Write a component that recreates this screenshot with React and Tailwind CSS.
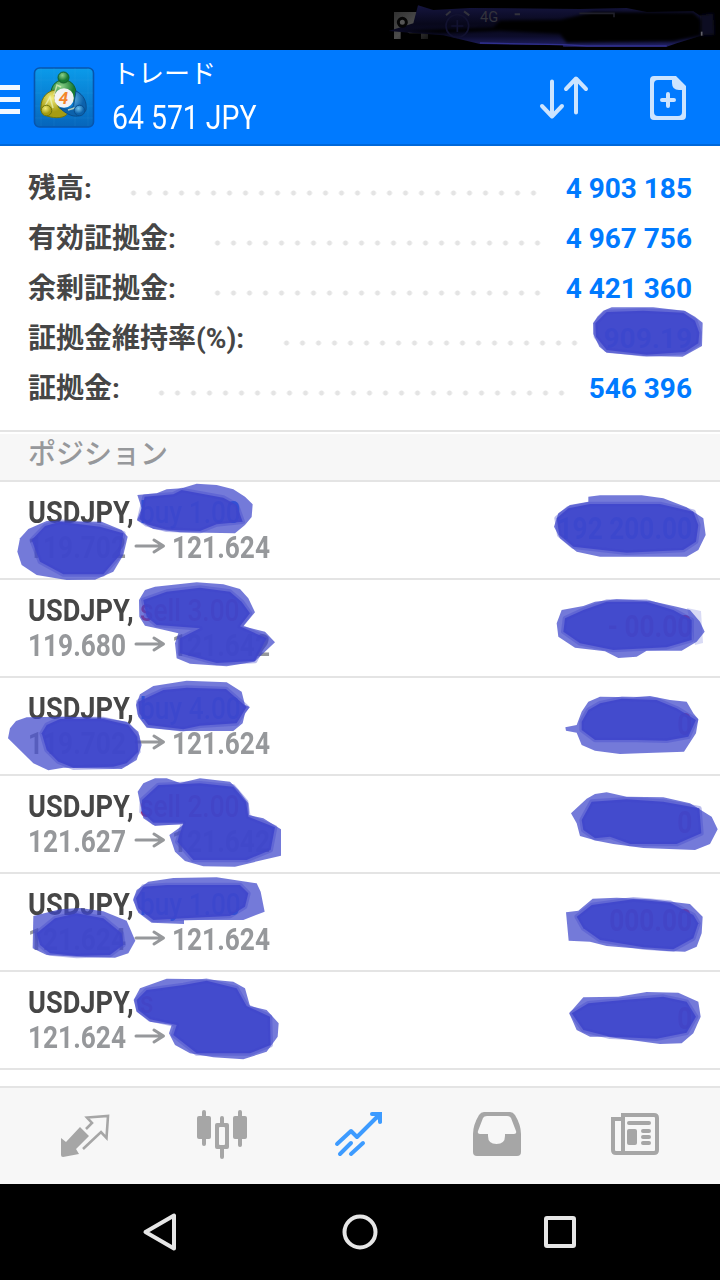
const JP = "font-[Roboto,'Noto_Sans_CJK_JP',sans-serif]";

const stats = [
  { label: "残高:", value: "4 903 185", pad: "w-[97px]", dots: "w-[416px]" },
  { label: "有効証拠金:", value: "4 967 756", pad: "w-[181px]", dots: "w-[336px]" },
  { label: "余剰証拠金:", value: "4 421 360", pad: "w-[181px]", dots: "w-[336px]" },
  { label: "証拠金維持率(%):", value: "909.19", pad: "w-[250px]", dots: "w-[304px]" },
  { label: "証拠金:", value: "546 396", pad: "w-[125px]", dots: "w-[416px]" },
];

const positions = [
  { side: "buy 1.00", open: "119.702", now: "121.624", profit: "192 200.00" },
  { side: "sell 3.00", open: "119.680", now: "121.642", profit: "- 00.00" },
  { side: "buy 4.00", open: "119.702", now: "121.624", profit: "0" },
  { side: "sell 2.00", open: "121.627", now: "121.642", profit: "0" },
  { side: "buy 1.00", open: "121.624", now: "121.624", profit: "000.00" },
  { side: "s", open: "121.624", now: "", profit: "0" },
];

function StatusBar() {
  return (
    <div className="h-[50px] shrink-0 bg-black">
      <svg className="ml-[380px] block" width="340" height="50" viewBox="0 0 1020 150">
        <defs>
          <linearGradient id="ink" x1="0" x2="0" y1="0" y2="1">
            <stop offset="0" stopColor="#15153f" />
            <stop offset=".45" stopColor="#08081b" />
            <stop offset=".75" stopColor="#0c0c2a" />
            <stop offset="1" stopColor="#222268" />
          </linearGradient>
          <linearGradient id="chip" x1="0" x2="1" y1="0" y2="1">
            <stop offset="0" stopColor="#303030" />
            <stop offset=".5" stopColor="#4c4c4c" />
            <stop offset="1" stopColor="#161616" />
          </linearGradient>
          <filter id="soft" x="-5%" y="-20%" width="110%" height="140%"><feGaussianBlur stdDeviation="4" /></filter>
        </defs>
        <path d="M42 36H144V117H123V100H88L62 84V117H42Z" fill="url(#chip)" />
        <path d="M26 93L100 70L114 16L160 30L270 24L600 27L740 24L800 36L940 34L965 50L960 108L890 130L860 140H550L548 136L300 132L190 106L90 98Z" fill="url(#ink)" />
        <path d="M960 46L1000 40L1003 104L960 108Z" fill="#0b0b22" filter="url(#soft)" />
        <path d="M360 62L540 60L640 36L940 38L962 60V106L880 124L560 128L540 102L360 92L180 100L60 92L340 82Z" fill="#010104" filter="url(#soft)" />
        <circle cx="67" cy="67" r="12" fill="#555" stroke="#050505" strokeWidth="9" />
        <path d="M300 129L548 134L620 138H860" stroke="#30308f" strokeWidth="4" fill="none" />
        <circle cx="232" cy="78" r="34" stroke="#121230" strokeWidth="5" fill="none" />
        <path d="M232 60V96M214 78H250" stroke="#121230" strokeWidth="5" />
        <path d="M198 46L212 34M252 34L268 46M404 43H420" stroke="#32323c" strokeWidth="6" />
        <text x="300" y="66" fontSize="44" fill="#33333c" fontFamily="Roboto">4G</text>
        <path d="M598 40H702V52" stroke="#20202a" strokeWidth="5" fill="none" />
        <path d="M965 95V107" stroke="#62626c" strokeWidth="5" />
      </svg>
    </div>
  );
}

function Logo() {
  return (
    <svg className="ml-[11px] block shrink-0" width="66" height="66" viewBox="0 0 66 66">
      <defs>
        <linearGradient id="tile" x1="0" x2="0" y1="0" y2="1">
          <stop offset="0" stopColor="#0b9bea" />
          <stop offset="1" stopColor="#0665bb" />
        </linearGradient>
        <radialGradient id="gr" cx=".4" cy=".3"><stop offset="0" stopColor="#8ed28a" /><stop offset="1" stopColor="#187a32" /></radialGradient>
        <radialGradient id="ye" cx=".4" cy=".3"><stop offset="0" stopColor="#f3ed7c" /><stop offset="1" stopColor="#a59c12" /></radialGradient>
        <radialGradient id="bl" cx=".4" cy=".3"><stop offset="0" stopColor="#6fc3f0" /><stop offset="1" stopColor="#0c62ac" /></radialGradient>
      </defs>
      <rect x="3.500" y="4" width="59" height="59" rx="5" fill="url(#tile)" stroke="#0755ad" strokeWidth="1.6" />
      <path d="M10 4V62M23 4V62M44 4V62M57 4V62M4 16H62M4 29H62M4 42H62M4 54H62" stroke="#41b5f3" strokeOpacity=".15" strokeWidth=".8" />
      <g transform="translate(0 1)">
        <path d="M20 36C18 22 24 15 32.500 15S47 22 45 36L40 36L36 26H29L23 34Z" fill="url(#gr)" stroke="#11602b" />
        <path d="M24 25C13 27 9 36 10 46L16 51C25 54 34 53 37 48L28 43L24 35Z" fill="url(#ye)" stroke="#6f750d" />
        <path d="M45 26C53 30 56 37 55 45C51 53 40 54 29 43C36 45 43 45 43 38Z" fill="url(#bl)" stroke="#094e8e" />
        <path d="M23 30L26 20L30 22M14 41L19 32L22 43M37 45L47 42" stroke="#e9f4c0" strokeOpacity=".7" strokeWidth="1.5" fill="none" />
        <circle cx="32.500" cy="12.500" r="5.500" fill="url(#gr)" stroke="#11602b" />
        <circle cx="15.500" cy="45.500" r="5.300" fill="url(#ye)" stroke="#6f750d" />
        <circle cx="48.500" cy="45.500" r="5.300" fill="url(#bl)" stroke="#094e8e" />
        <circle cx="33" cy="33" r="9.800" fill="#f3f3f5" />
        <text x="32.500" y="39" textAnchor="middle" fontSize="17" fontWeight="700" fontStyle="italic" fill="#f3852b" fontFamily="Roboto">4</text>
      </g>
    </svg>
  );
}

function Header() {
  return (
    <header className="flex h-24 shrink-0 items-center border-b-2 border-[#0068da] bg-[#007aff] text-white">
      <div className="flex h-full w-5 shrink-0 flex-col justify-center gap-[7px] pt-1">
        <i className="h-[5px] bg-white/95" />
        <i className="h-[5px] bg-white/95" />
        <i className="h-[5px] bg-white/95" />
      </div>
      <Logo />
      <div className="ml-[15px] w-[410px] shrink-0">
        <div className={`${JP} h-10 text-[26px] leading-[42px]`}>トレード</div>
        <div className="h-[48px] w-max origin-left scale-x-[0.835] font-[Roboto,sans-serif] text-[34px] leading-[49px] whitespace-nowrap">64 571 JPY</div>
      </div>
      <svg className="ml-[15px] block shrink-0" width="54" height="48" viewBox="0 0 54 48" fill="none" stroke="#cce4ff" strokeWidth="4" strokeLinecap="round" strokeLinejoin="round">
        <path d="M15 8.500V43M5 33L15 43.500L25 33M39 39.500V6M29 16L39 5.500L49 16" />
      </svg>
      <svg className="ml-[55px] block shrink-0" width="42" height="48" viewBox="0 0 42 48">
        <path fill="#cce4ff" fillRule="evenodd" d="M7 3H30L40 13V43Q40 47 36 47H8Q4 47 4 43V7Q4 3 8 3ZM12 7Q8 7 8 11V39Q8 43 12 43H32Q36 43 36 39V17H33Q26 17 26 10V7Z" />
        <path d="M22 21V33M16 27H28" stroke="#cce4ff" strokeWidth="4" strokeLinecap="round" />
      </svg>
    </header>
  );
}

function Stats() {
  return (
    <section className={`${JP} shrink-0 border-b-2 border-[#e4e4e4] px-7 py-[17px] text-[28px] font-bold`}>
      {stats.map((s) => (
        <div key={s.label} className="flex h-[50px] items-center leading-[50px] whitespace-nowrap">
          <span className={`${s.pad} shrink-0 pt-[2px] text-[#464646]`}>{s.label}</span>
          <span className={`${s.dots} mt-[10px] h-[6px] shrink-0 bg-[radial-gradient(circle,#e4e4e4_2.2px,transparent_2.9px)] bg-[length:16px_6px] bg-[position:0.5px_0]`} />
          <span className="ml-auto pt-[2px] text-[#007aff]">{s.value}</span>
        </div>
      ))}
    </section>
  );
}

function Position({ p }) {
  const tone = p.side.startsWith("b") ? "text-[#007aff]" : "text-[#e0203a]";
  const gain = p.profit.startsWith("1") ? "text-[#007aff]" : "text-[#e0203a]";
  return (
    <li className="flex h-[98px] items-start justify-between border-b-2 border-[#e4e4e4] px-7 pt-[13px] text-[32px] leading-[34px] font-bold whitespace-nowrap">
      <div>
        <div className="flex text-[#464646]">
          <span className="w-[112px]"><span className="inline-block origin-left scale-x-[0.85]">USDJPY,</span></span>
          <span className={`inline-block origin-left scale-x-[0.82] font-medium ${tone}`}>{p.side}</span>
        </div>
        <div className="mt-px flex items-center text-[#96989b]">
          <span className="w-[106px]"><span className="inline-block origin-left scale-x-[0.82]">{p.open}</span></span>
          <svg className="mb-[2px] block" width="32" height="18" viewBox="0 0 32 18" fill="none" stroke="#96989b" strokeWidth="3" strokeLinecap="round" strokeLinejoin="round">
            <path d="M2 9H29M20 3L29.500 9L20 15" />
          </svg>
          <span className="ml-[6px] inline-block origin-left scale-x-[0.82]">{p.now}</span>
        </div>
      </div>
      <span className={`mt-4 inline-block origin-right scale-x-[0.82] ${gain}`}>{p.profit}</span>
    </li>
  );
}

const blots = [
  { at: "translate(360 150) scale(.33333)", outer: "M700 520L712 500L730 482L755 472L880 472L975 483L1005 500L1028 518L1026 588L968 620L850 618L740 608L718 590L700 552Z", core: "M706 520L740 486L850 482L970 488L1005 512L1018 548L1015 580L975 606L860 614L740 600L708 560Z" },
  { at: "translate(0 425) scale(.33333)", outer: "M412 210L470 205L500 193L545 190L590 176L650 180L700 193L735 215L758 238L755 276L735 300L705 325L540 322L460 312L411 286L425 250Z", core: "M434 215L520 208L545 195L670 218L710 240L728 290L650 298L600 318L500 314L440 298L418 282Z" },
  { at: "translate(0 425) scale(.33333)", outer: "M52 380L60 340L85 312L140 288L305 290L365 315L383 335L370 390L340 440L285 464L200 465L110 450L65 420Z", core: "M95 345L135 303L180 290L300 305L370 325L360 390L310 448L190 448L120 410Z" },
  { at: "translate(0 425) scale(.33333)", outer: "M417 525L435 495L465 485L590 472L670 478L720 492L745 520L765 562L730 604L795 620L825 652L763 710L680 724L570 716L530 700L525 655L535 625L480 612L435 602L418 575Z", core: "M430 525L500 500L600 488L690 500L725 530L750 565L720 604L800 640L765 708L650 714L540 685L540 640L600 610L470 600L440 575Z" },
  { at: "translate(0 675) scale(.33333)", outer: "M408 90L420 58L460 33L560 17L680 22L725 50L735 90L750 96L735 115L728 145L700 168L540 168L440 158L415 125Z", core: "M415 80L490 45L560 38L678 42L740 96L710 145L600 152L550 163L445 150L418 115Z" },
  { at: "translate(0 675) scale(.33333)", outer: "M24 190L30 160L48 138L80 127L190 125L310 128L380 140L415 170L425 210L410 255L365 282L190 278L145 286L100 265L65 230Z", core: "M125 175L140 150L180 132L310 132L385 150L412 185L415 230L380 265L340 275L220 278L175 260L140 225Z" },
  { at: "translate(0 675) scale(.33333)", outer: "M413 350L430 325L465 310L500 310L540 324L600 310L690 320L715 345L745 385L747 420L790 430L843 463V542L705 575L610 574L555 558L525 530L508 480L555 446L465 453L430 430Z", core: "M426 375L475 330L600 325L700 335L738 380L745 425L825 457L812 525L740 555L580 555L532 500L550 443L460 443L425 410Z" },
  { at: "translate(0 870) scale(.33333)", outer: "M399 90L410 60L445 35L520 24L650 22L770 40L782 65L794 125L730 150L552 150V162L455 158L415 128Z", core: "M408 85L430 50L500 45L720 45L745 70L735 110L690 138L552 145L460 150L415 115Z" },
  { at: "translate(0 870) scale(.33333)", outer: "M100 138L180 118L240 114L310 124L380 152L406 212L385 250L345 263L230 260L140 255L98 235Z", core: "M110 190L165 145L230 130L310 145L365 190L370 225L330 255L230 258L150 250L120 225Z" },
  { at: "translate(0 870) scale(.33333)", outer: "M401 390L420 355L500 326L620 328L700 335L735 355L750 408L800 420L836 460L833 500L800 545L730 568L640 562L570 550L525 525L507 490L515 465L450 455L410 425Z", core: "M410 390L440 360L550 345L620 332L710 355L740 408L810 440L812 525L750 550L590 550L520 495L530 465L450 448L415 420Z" },
  { at: "translate(540 480) scale(.33333)", outer: "M42 140L55 100L90 75L145 65V50L180 46H305L370 55L440 82L490 115L497 165L475 210L440 230H180L110 215L60 175Z", core: "M50 115L85 85L150 72L360 72L460 95L475 135L468 185L430 210L260 218L100 200L58 165Z" },
  { at: "translate(540 480) scale(.33333)", outer: "M50 430L65 390L130 378L165 365L230 358L330 362L410 380L450 390L480 425L494 455L470 485L425 512L320 512L290 530L235 534L195 514L105 503L55 470Z", core: "M75 415L130 390L200 365L320 365L400 390L455 420L455 480L380 502L220 510L120 490L70 455Z" },
  { at: "translate(540 480) scale(.33333)", outer: "M76 742L110 735L125 695L145 665L180 650L280 652L330 648L390 660L440 665L460 700L475 718L468 760L432 815L300 820L240 822L165 812L125 795L110 758L78 752Z", core: "M125 725L145 690L180 670L245 656L350 660L410 685L468 720L445 770L380 782L290 780L240 780L165 780L125 750Z" },
  { at: "translate(540 770) scale(.33333)", outer: "M93 130L140 86L165 72L200 67L260 80L370 82L450 100L515 140L533 178L510 222L465 240L310 234L220 222L170 212L120 198L110 160Z", core: "M125 150L155 95L260 88L370 95L478 115L484 190L410 222L270 222L210 200L165 205L130 180Z" },
  { at: "translate(540 770) scale(.33333)", outer: "M78 427L115 422L158 386L230 383L330 388L450 402L488 440L485 490L470 530L435 545L380 543L200 528L150 515L86 512Z", core: "M110 440L155 405L280 388L390 398L460 435L475 460L460 505L400 538L310 532L180 510L130 475Z" },
  { at: "translate(540 770) scale(.33333)", outer: "M88 730L130 682L235 680L320 666L415 668L475 695L482 740L460 790L425 820L360 822L200 800L150 800L110 780Z", core: "M95 730L145 700L250 690L370 680L440 695L468 740L440 788L350 806L210 800L130 780Z" },
];

function Blots() {
  return (
    <svg className="pointer-events-none absolute top-0 left-0" width="720" height="1280" viewBox="0 0 720 1280">
      {blots.map((b, i) => (
        <g key={i} transform={b.at} fill="#3e46cb">
          <path d={b.outer} fillOpacity=".72" />
          <path d={b.core} fillOpacity=".9" stroke="#3e46cb" strokeOpacity=".35" strokeWidth="14" strokeLinejoin="round" />
        </g>
      ))}
      <path d="M687 608L701 611L703 643L695 645Z" fill="#3e46cb" fillOpacity=".2" />
    </svg>
  );
}

function TabBar() {
  return (
    <nav className="flex h-[98px] shrink-0 items-center border-t-2 border-[#e4e4e4] bg-[#f7f7f7] pb-[4px] pl-[58px] text-[#a6a6a6]">
      <svg className="mr-[82px] block" width="54" height="54" viewBox="0 0 54 54">
        <path d="M3 31L8 35L22 20L31 29L18 42L21 47L5 50Q3 50 3 48Z" fill="currentColor" />
        <path d="M28 22L34 16L29 10.500L50 9L48.500 31L43 25L25 42" fill="none" stroke="currentColor" strokeWidth="2.600" />
      </svg>
      <svg className="mr-[82px] block" width="56" height="54" viewBox="0 0 56 54" fill="currentColor">
        <rect x="3" y="9" width="14" height="23" rx="2" /><rect x="8" y="3" width="4" height="36" rx="2" />
        <rect x="39" y="9" width="14" height="23" rx="2" /><rect x="44" y="3" width="4" height="37" rx="2" />
        <path fillRule="evenodd" d="M23 16H33Q35 16 35 18V40Q35 42 33 42H23Q21 42 21 40V18Q21 16 23 16ZM25 22V37Q25 38 26 38H30Q31 38 31 37V21Q31 20 30 20H26Q25 20 25 21Z" />
        <path d="M26 16V11Q26 9 28 9T30 11V16ZM26 42V50Q26 52 28 52T30 50V42Z" />
      </svg>
      <svg className="mr-[84px] block" width="54" height="54" viewBox="0 0 54 54" fill="none" stroke="#3d9bff" strokeWidth="4" strokeLinecap="round" strokeLinejoin="round">
        <path d="M5 37L19 24L25 30L47 8M8 47L19 36M19 47L31 36" />
        <path d="M40 5H50V16L45 12Z" fill="#3d9bff" stroke="none" /><path d="M40 7H48V15" />
      </svg>
      <svg className="mr-[84px] block" width="54" height="54" viewBox="0 0 54 54">
        <path fill="currentColor" fillRule="evenodd" d="M14 5H40Q43 5 45 8Q51 18 51 27V45Q51 49 47 49H7Q3 49 3 45V27Q3 18 9 8Q11 5 14 5ZM17 9Q14 9 13 11L8 24Q7 27 10 27H18V29Q18 37 26.500 37T35 29V27H44Q47 27 46 24L41 11Q40 9 37 9Z" />
      </svg>
      <svg className="block" width="54" height="54" viewBox="0 0 54 54">
        <path d="M15 8H46Q49 8 49 11V43Q49 46 46 46H8Q5 46 5 43V12H13M15 6V46" fill="none" stroke="currentColor" strokeWidth="4" />
        <rect x="19" y="14" width="24" height="4" rx="2" fill="currentColor" /><rect x="19" y="22" width="10" height="16" rx="2" fill="currentColor" />
        <path d="M35 24H41M35 30H41M35 36H41" stroke="currentColor" strokeWidth="4" strokeLinecap="round" />
      </svg>
    </nav>
  );
}

function SystemNav() {
  return (
    <div className="flex h-24 shrink-0 items-center bg-black pl-[140px]">
      <svg className="block" width="40" height="40" viewBox="0 0 40 40" fill="none" stroke="#e6e6e6" strokeWidth="4" strokeLinejoin="round"><path d="M34 3.500V36.500L5.500 20Z" /></svg>
      <svg className="ml-[160px] block" width="40" height="40" viewBox="0 0 40 40" fill="none" stroke="#e6e6e6" strokeWidth="4"><circle cx="20" cy="20" r="15.500" /></svg>
      <svg className="ml-[160px] block" width="40" height="40" viewBox="0 0 40 40" fill="none" stroke="#e6e6e6" strokeWidth="4"><rect x="6" y="6" width="28" height="28" rx="1" /></svg>
    </div>
  );
}

export default function App() {
  return (
    <div className="relative flex h-[1280px] w-[720px] flex-col overflow-hidden bg-white font-[Roboto,sans-serif]">
      <StatusBar />
      <Header />
      <Stats />
      <h2 className={`${JP} mt-[2px] h-12 shrink-0 border-b-2 border-[#e4e4e4] bg-[#f7f7f7] pl-7 text-[28px] leading-[41px] font-medium text-[#96989b]`}>ポジション</h2>
      <ul className="flex-1">
        {positions.map((p, i) => (
          <Position key={i} p={p} />
        ))}
      </ul>
      <TabBar />
      <SystemNav />
      <Blots />
    </div>
  );
}
